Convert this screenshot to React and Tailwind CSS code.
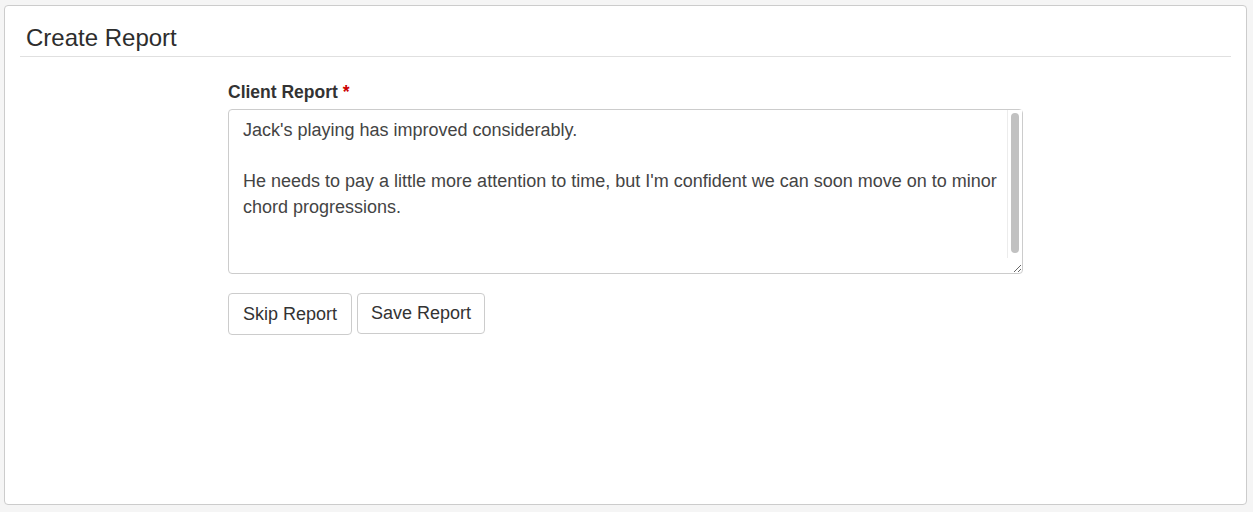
import { useState } from "react";

const initialText =
  "Jack's playing has improved considerably.\n\nHe needs to pay a little more attention to time, but I'm confident we can soon move on to minor chord progressions.";

export default function App() {
  const [report, setReport] = useState(initialText);

  return (
    <div className="h-[512px] bg-[#f5f5f5] pt-[5px] pl-[4px] pr-[6px] font-['Liberation_Sans',Arial,sans-serif] text-[#333]">
      <div className="h-[500px] bg-white border border-[#ccc] rounded-[4px] px-[15px]">
        {/* Header */}
        <div className="border-b border-[#e0e0e0] pt-[17px] pb-[3px] px-[6px]">
          <h3 className="text-[24px] leading-[30px] font-normal text-[#2d2d2d]">Create Report</h3>
        </div>

        {/* Form */}
        <div className="ml-[208px] w-[795px] pt-[24px]">
          <label className="block text-[17.5px] font-bold leading-[22px] mb-[6px]">
            Client Report <span className="text-[#c00]">*</span>
          </label>
          <div className="relative">
            <textarea
              value={report}
              onChange={e => setReport(e.target.value)}
              className="block w-full h-[165px] border border-[#ccc] rounded-[4px] pl-[14px] pr-[16px] pt-[8px] pb-[7px] text-[18px] leading-[25.5px] text-[#444] focus:outline-none"
            />
            {/* macOS-style scrollbar overlay */}
            <div className="absolute top-[1px] right-[1px] bottom-[16px] w-[15px] border-l border-[#ececec] bg-white flex justify-center pt-[3px] pb-[5px] pointer-events-none">
              <div className="w-[8px] h-full rounded-full bg-[#c1c1c1]" />
            </div>
          </div>
          <div className="flex gap-[5px] mt-[19px]">
            <button className="h-[42px] px-[14px] border border-[#ccc] rounded-[4px] bg-white text-[18px] text-[#333]">Skip Report</button>
            <button className="h-[41px] px-[13px] border border-[#ccc] rounded-[4px] bg-white text-[18px] text-[#333]">Save Report</button>
          </div>
        </div>
      </div>
    </div>
  );
}
